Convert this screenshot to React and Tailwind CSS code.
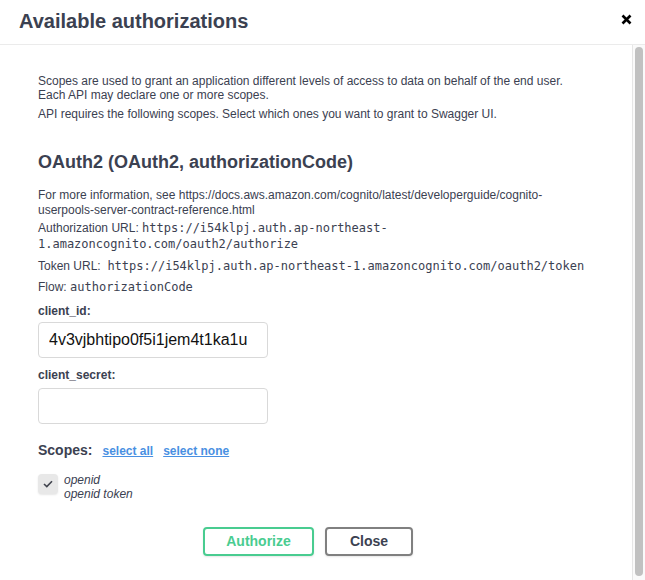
const SANS = { fontFamily: '"Liberation Sans", Arial, sans-serif' };

function CodeText({ children }) {
  return (
    <code className="font-['DejaVu_Sans_Mono',monospace] text-[12px] text-[#3b4151]">{children}</code>
  );
}

export default function App() {
  return (
    <div
      className="w-[645px] h-[580px] bg-white flex flex-col overflow-hidden text-[#3b4151] font-['Liberation_Sans',Arial,sans-serif]"
    >
      {/* Header */}
      <div className="h-[45px] shrink-0 flex items-center justify-between pl-[19px] pr-[13px] border-b border-[#ebebeb]">
        <h3 className="text-[20px] font-bold leading-none mt-[-2px]">Available authorizations</h3>
        <button className="w-[12px] h-[12px] flex items-center justify-center mt-[-5px]">
          <svg width="11" height="11" viewBox="0 0 11 11">
            <path d="M1.5 1.5 L9.5 9.5 M9.5 1.5 L1.5 9.5" stroke="#000" strokeWidth="2.6" strokeLinecap="butt" />
          </svg>
        </button>
      </div>

      <div className="flex-1 flex min-h-0">
        {/* Content */}
        <div className="flex-1 pl-[38px] pr-[20px] pt-[29px]">
          <p className="text-[12px] leading-[14px] mb-[5px]">
            Scopes are used to grant an application different levels of access to data on behalf of the end user.
            <br />
            Each API may declare one or more scopes.
          </p>
          <p className="text-[12px] leading-[14px]">
            API requires the following scopes. Select which ones you want to grant to Swagger UI.
          </p>

          <h4 className="text-[18px] font-bold leading-[20px] mt-[31px] mb-[16px]">
            OAuth2 (OAuth2, authorizationCode)
          </h4>

          <p className="text-[12px] leading-[15px] mb-[2px]">
            For more information, see https://docs.aws.amazon.com/cognito/latest/developerguide/cognito-
            <br />
            userpools-server-contract-reference.html
          </p>
          <p className="text-[12px] leading-[16px] mb-[6px]">
            Authorization URL: <CodeText>https://i54klpj.auth.ap-northeast-</CodeText>
            <br />
            <CodeText>1.amazoncognito.com/oauth2/authorize</CodeText>
          </p>
          <p className="text-[12px] leading-[16px] mb-[5px]">
            Token URL:&nbsp; <CodeText>https://i54klpj.auth.ap-northeast-1.amazoncognito.com/oauth2/token</CodeText>
          </p>
          <p className="text-[12px] leading-[16px] mb-[8px]">
            Flow: <CodeText>authorizationCode</CodeText>
          </p>

          <label className="block text-[12px] font-bold leading-[16px] mb-[3px]">client_id:</label>
          <input
            readOnly
            value="4v3vjbhtipo0f5i1jem4t1ka1u"
            className="block w-[230px] h-[36px] px-[10px] border border-[#d9d9d9] rounded-[4px] text-[16px] text-[#111] outline-none"
            style={SANS}
          />

          <label className="block text-[12px] font-bold leading-[16px] mt-[9px] mb-[5px]">client_secret:</label>
          <input
            readOnly
            value=""
            className="block w-[230px] h-[36px] px-[10px] border border-[#d9d9d9] rounded-[4px] text-[16px] outline-none"
            style={SANS}
          />

          <div className="flex items-center mt-[16px] mb-[12px]">
            <span className="text-[14px] font-bold mr-[10px]">Scopes:</span>
            <a className="text-[12px] font-bold text-[#4990e2] underline mr-[10px] cursor-pointer">select all</a>
            <a className="text-[12px] font-bold text-[#4990e2] underline cursor-pointer">select none</a>
          </div>

          <div className="flex items-start">
            <div className="w-[20px] h-[20px] mt-[1px] rounded-[4px] bg-[#e8e8e8] flex items-center justify-center shrink-0 shadow-[0_1px_2px_rgba(0,0,0,0.1)]">
              <svg width="10" height="8" viewBox="0 0 10 8">
                <path d="M1 4 L3.8 6.6 L9 1.2" fill="none" stroke="#41444e" strokeWidth="1.6" />
              </svg>
            </div>
            <div className="ml-[6px] text-[12px] italic leading-[14px]">
              <div>openid</div>
              <div>openid token</div>
            </div>
          </div>

          <div className="flex justify-center gap-[11px] mt-[26px] pr-[34px]">
            <button className="w-[111px] h-[29px] border-2 border-[#49cc90] rounded-[4px] text-[#49cc90] text-[14px] font-bold shadow-[0_1px_2px_rgba(0,0,0,0.1)]">
              Authorize
            </button>
            <button className="w-[88px] h-[29px] border-2 border-[#808080] rounded-[4px] text-[#3b4151] text-[14px] font-bold shadow-[0_1px_2px_rgba(0,0,0,0.1)]">
              Close
            </button>
          </div>
        </div>

        {/* Scrollbar */}
        <div className="w-[13px] shrink-0 border-l border-[#e6e6e6] bg-[#fafafa] px-[2px] pt-[2px] pb-[4px]">
          <div className="h-full w-full rounded-full bg-[#c1c1c1]" />
        </div>
      </div>
    </div>
  );
}
